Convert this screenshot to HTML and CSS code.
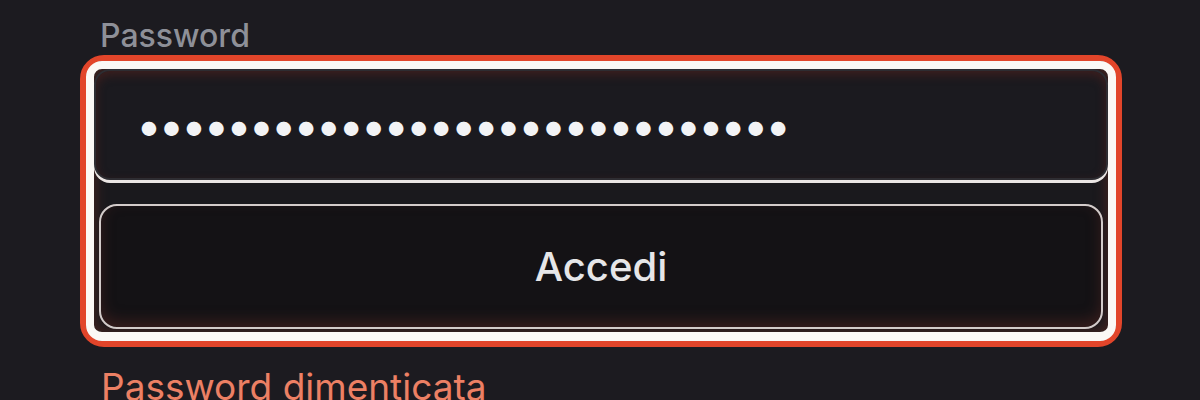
FILE: index.html
```html
<!DOCTYPE html>
<html lang="it">
<head>
<meta charset="utf-8">
<title>Accedi</title>
<link rel="stylesheet" href="styles.css">
</head>
<body>
<form class="form">
  <label class="label" for="pw">Password</label>
  <div class="ring">
    <div class="inner">
      <div class="field" id="pw"><span class="dots">•••••••••••••••••••••••••••••</span></div>
      <button class="btn" type="button">Accedi</button>
    </div>
  </div>
  <a class="forgot" href="#">Password dimenticata</a>
</form>
</body>
</html>
```
FILE: styles.css
```css
html, body {
  margin: 0;
  background: #1c1b20;
  height: 100%;
  overflow: hidden;
}
.form {
  padding: 17px 78px 0 80px;
  font-family: Inter, "Noto Sans", sans-serif;
  display: flex;
  flex-direction: column;
}
.label {
  margin-left: 20px;
  font-size: 32px;
  line-height: 38px;
  color: #8e9098;
  font-weight: 500;
}
.ring {
  border: 6px solid #e2452a;
  border-radius: 24px;
}
.inner {
  border: 8px solid #fbf8f5;
  border-bottom-width: 9px;
  border-radius: 16px;
  background: #1a191d;
  box-shadow: inset 0 0 14px rgba(110, 45, 35, 0.6);
  display: flex;
  flex-direction: column;
  padding-bottom: 3px;
}
.field {
  height: 107px;
  border: 2px solid #2e2d32;
  border-radius: 16px;
  background: #1b1a1f;
  box-shadow: 0 3px 0 #ebe6e4, inset 0 4px 10px rgba(90, 35, 30, 0.55);
  display: flex;
  align-items: center;
  padding-left: 40px;
}
.dots {
  font-size: 46px;
  line-height: 1;
  color: #f2f3f5;
  letter-spacing: -3.4px;
}
.btn {
  margin: 24px 5px 0 5px;
  height: 125px;
  border: 2px solid #d3cbca;
  border-radius: 18px;
  background: #141215;
  box-shadow: inset 0 -6px 14px rgba(90, 40, 35, 0.5);
  color: #e6e6e8;
  font-family: Inter, "Noto Sans", sans-serif;
  font-size: 40px;
  font-weight: 500;
  padding: 0;
}
.forgot {
  margin: 18px 0 0 21px;
  font-size: 37px;
  line-height: 44px;
  color: #ec8064;
  text-decoration: none;
}
```
